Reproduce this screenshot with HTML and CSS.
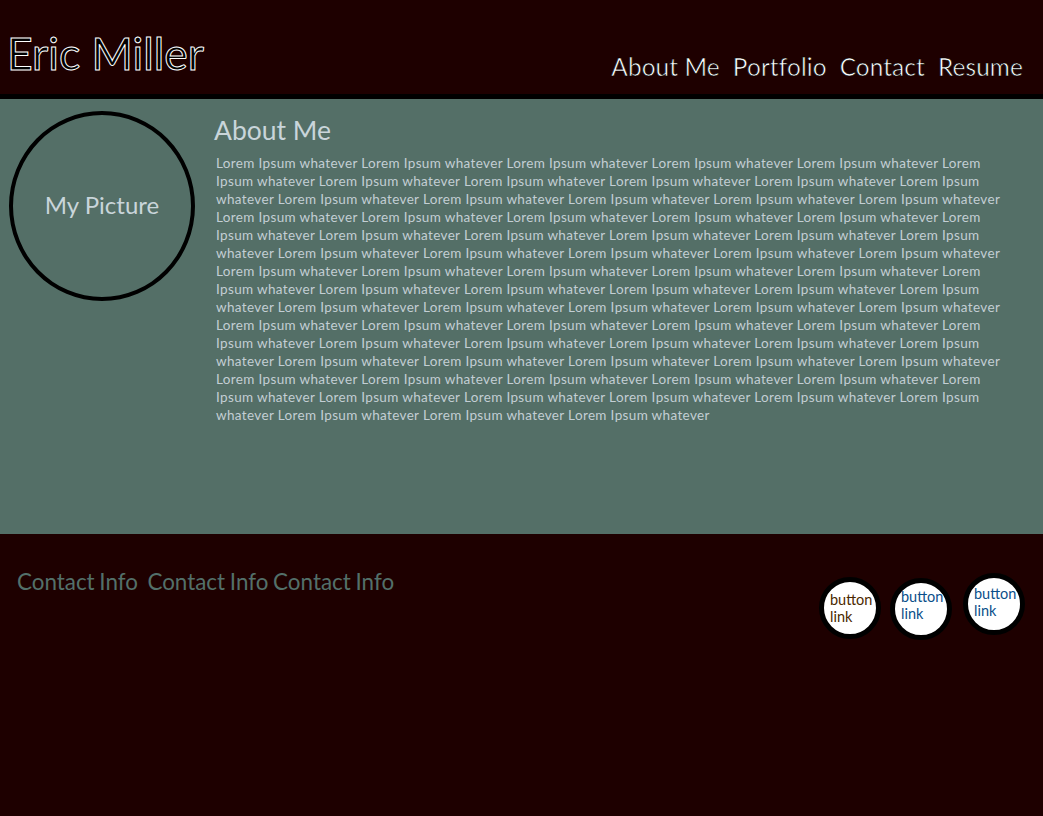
FILE: index.html
```html
<!DOCTYPE html>
<html lang="en">
<head>
<meta charset="utf-8">
<title>Eric Miller</title>
<link rel="stylesheet" href="styles.css">
</head>
<body>
<header class="site-header">
  <h1 class="name">Eric Miller</h1>
  <nav class="nav">
    <a href="#">About Me</a>
    <a href="#">Portfolio</a>
    <a href="#">Contact</a>
    <a href="#">Resume</a>
  </nav>
</header>
<main class="about">
  <div class="picture">My Picture</div>
  <section class="about-text">
    <h2>About Me</h2>
    <p>Lorem Ipsum whatever Lorem Ipsum whatever Lorem Ipsum whatever Lorem Ipsum whatever Lorem Ipsum whatever Lorem Ipsum whatever
Lorem Ipsum whatever Lorem Ipsum whatever Lorem Ipsum whatever Lorem Ipsum whatever Lorem Ipsum whatever Lorem Ipsum whatever
Lorem Ipsum whatever Lorem Ipsum whatever Lorem Ipsum whatever Lorem Ipsum whatever Lorem Ipsum whatever Lorem Ipsum whatever
Lorem Ipsum whatever Lorem Ipsum whatever Lorem Ipsum whatever Lorem Ipsum whatever Lorem Ipsum whatever Lorem Ipsum whatever
Lorem Ipsum whatever Lorem Ipsum whatever Lorem Ipsum whatever Lorem Ipsum whatever Lorem Ipsum whatever Lorem Ipsum whatever
Lorem Ipsum whatever Lorem Ipsum whatever Lorem Ipsum whatever Lorem Ipsum whatever Lorem Ipsum whatever Lorem Ipsum whatever
Lorem Ipsum whatever Lorem Ipsum whatever Lorem Ipsum whatever Lorem Ipsum whatever Lorem Ipsum whatever Lorem Ipsum whatever
Lorem Ipsum whatever Lorem Ipsum whatever Lorem Ipsum whatever Lorem Ipsum whatever Lorem Ipsum whatever Lorem Ipsum whatever
Lorem Ipsum whatever Lorem Ipsum whatever Lorem Ipsum whatever Lorem Ipsum whatever Lorem Ipsum whatever Lorem Ipsum whatever
Lorem Ipsum whatever Lorem Ipsum whatever Lorem Ipsum whatever Lorem Ipsum whatever Lorem Ipsum whatever Lorem Ipsum whatever
Lorem Ipsum whatever Lorem Ipsum whatever Lorem Ipsum whatever Lorem Ipsum whatever Lorem Ipsum whatever Lorem Ipsum whatever
Lorem Ipsum whatever Lorem Ipsum whatever Lorem Ipsum whatever Lorem Ipsum whatever Lorem Ipsum whatever Lorem Ipsum whatever
Lorem Ipsum whatever Lorem Ipsum whatever Lorem Ipsum whatever Lorem Ipsum whatever Lorem Ipsum whatever Lorem Ipsum whatever</p>
  </section>
</main>
<footer class="footer">
  <div class="contact">Contact Info&nbsp; Contact Info Contact Info</div>
  <div class="buttons">
    <a class="btn btn-one" href="#">button link</a>
    <a class="btn btn-two" href="#">button link</a>
    <a class="btn btn-three" href="#">button link</a>
  </div>
</footer>
</body>
</html>
```
FILE: styles.css
```css
html, body {
  margin: 0;
  padding: 0;
  background: #1e0000;
  font-family: Lato, "Open Sans", sans-serif;
}

.site-header {
  height: 94px;
  border-bottom: 5px solid #000;
  display: flex;
  justify-content: space-between;
  align-items: flex-start;
  padding: 0 20px 0 7px;
}

.name {
  margin: 28px 0 0 0;
  font-size: 44.5px;
  font-weight: 400;
  line-height: 50px;
  color: #000;
  -webkit-text-stroke: 1px #fff;
}

.nav {
  margin-top: 52px;
  display: flex;
  gap: 13px;
}

.nav a {
  color: #fff;
  text-decoration: none;
  font-size: 24.4px;
  line-height: 30px;
  -webkit-text-stroke: 0.6px #000;
  letter-spacing: 0.1px;
}

.about {
  background: #546f67;
  height: 435px;
  display: flex;
  align-items: flex-start;
  padding: 0 32px 0 9px;
}

.picture {
  margin-top: 12px;
  width: 178px;
  height: 178px;
  padding-bottom: 4px;
  border: 4px solid #000;
  border-radius: 50%;
  display: flex;
  align-items: center;
  justify-content: center;
  color: #c9d5da;
  font-size: 24px;
  flex-shrink: 0;
}

.about-text {
  margin-left: 21px;
  flex: 1;
}

.about-text h2 {
  margin: 14px 0 0 -2px;
  font-size: 26.5px;
  font-weight: 400;
  line-height: 34px;
  color: #c9d5da;
}

.about-text p {
  margin: 7px 0 0 0;
  font-size: 13.5px;
  letter-spacing: 0.35px;
  line-height: 18px;
  color: #c3ced4;
}

.footer {
  display: flex;
  justify-content: space-between;
  align-items: flex-start;
  padding: 0 18px 0 17px;
}

.contact {
  margin-top: 34px;
  font-size: 22.4px;
  line-height: 28px;
  color: #53706a;
  word-spacing: -1px;
}

.buttons {
  display: flex;
  align-items: flex-start;
  margin-top: 39px;
}

.btn {
  box-sizing: border-box;
  width: 62px;
  height: 62px;
  border: 5px solid #000;
  border-radius: 50%;
  background: #fff;
  font-size: 14.5px;
  line-height: 17px;
  text-decoration: none;
  color: #0a4f8a;
  display: block;
  white-space: normal;
}

.btn-one {
  color: #4a2800;
  margin-top: 4px;
  padding: 9px 0 0 6px;
}

.btn-two {
  margin-top: 5px;
  margin-left: 9px;
  padding: 5px 0 0 6px;
}

.btn-three {
  margin-top: 0;
  margin-left: 11px;
  padding: 7px 0 0 6px;
}
```
